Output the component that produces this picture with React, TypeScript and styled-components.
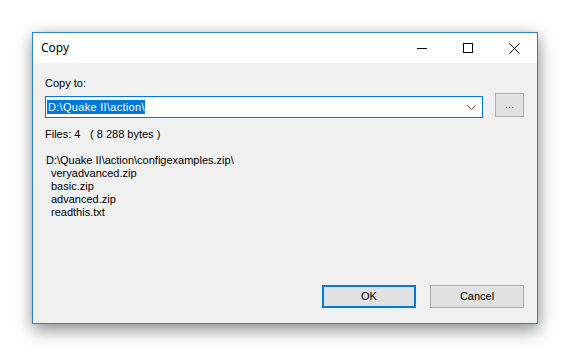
import React from "react";
import styled, { createGlobalStyle } from "styled-components";

const Global = createGlobalStyle`
  html, body { margin: 0; padding: 0; background: #ffffff; }
  body { width: 570px; height: 356px; overflow: hidden; }
`;

const Screen = styled.div`
  padding: 32px 0 0 32px;
`;

const Window = styled.div`
  box-sizing: border-box;
  width: 506px;
  height: 292px;
  border: 1px solid #2b84cf;
  display: flex;
  flex-direction: column;
  background: #f0f0f0;
  box-shadow: 1px 7px 16px rgba(0, 0, 0, 0.38), 0 0 12px rgba(0, 0, 0, 0.12);
  font-family: "Liberation Sans", Arial, sans-serif;
  font-size: 11px;
  color: #000;
`;

const TitleBar = styled.div`
  height: 30px;
  background: #ffffff;
  display: flex;
  align-items: center;
`;

const Title = styled.div`
  flex: 1;
  padding-left: 8px;
  font-family: "Noto Sans", "Open Sans", sans-serif;
  font-size: 12px;
  line-height: 16px;
  padding-bottom: 1px;
`;

const CaptionButton = styled.div`
  width: 46px;
  height: 30px;
  display: flex;
  align-items: center;
  justify-content: center;
`;

const Body = styled.div`
  flex: 1;
  display: flex;
  flex-direction: column;
  padding: 14px 13px 15px 12px;
  line-height: 13px;
`;

const Label = styled.div`
  height: 13px;
`;

const PathRow = styled.div`
  display: flex;
  align-items: flex-start;
  gap: 12px;
  margin-top: 3px;
  height: 24px;
`;

const Combo = styled.div`
  box-sizing: border-box;
  width: 438px;
  height: 22px;
  margin-top: 3px;
  border: 1px solid #0078d7;
  background: #ffffff;
  display: flex;
  align-items: center;
  padding-left: 1px;
`;

const Selected = styled.span`
  background: #0078d7;
  color: #ffffff;
  padding: 0 0 0 1px;
  line-height: 14px;
  letter-spacing: 0.3px;
`;

const ComboFill = styled.div`
  flex: 1;
`;

const ComboArrow = styled.div`
  width: 17px;
  height: 20px;
  display: flex;
  align-items: center;
  justify-content: center;
  margin-right: 2px;
`;

const BrowseButton = styled.div`
  box-sizing: border-box;
  width: 29px;
  height: 24px;
  border: 1px solid #adadad;
  background: #e1e1e1;
  color: #6d6d6d;
  display: flex;
  align-items: center;
  justify-content: center;
  padding-bottom: 2px;
`;

const InfoLine = styled.div`
  margin-top: 11px;
  display: flex;
  height: 13px;
`;

const FilesCount = styled.span`
  width: 45px;
`;

const List = styled.div`
  margin-top: 13px;
  display: flex;
  flex-direction: column;
`;

const ListItem = styled.div<{ $indent?: boolean }>`
  height: 13px;
  padding-left: ${(p) => (p.$indent ? "6px" : "1px")};
  white-space: pre;
`;

const Spacer = styled.div`
  flex: 1;
`;

const ButtonRow = styled.div`
  display: flex;
  justify-content: flex-end;
  gap: 14px;
`;

const DialogButton = styled.div<{ $default?: boolean }>`
  box-sizing: border-box;
  width: 94px;
  height: 23px;
  background: #e1e1e1;
  border: ${(p) => (p.$default ? "2px solid #0078d7" : "1px solid #adadad")};
  display: flex;
  align-items: center;
  justify-content: center;
`;

const files = ["veryadvanced.zip", "basic.zip", "advanced.zip", "readthis.txt"];

export default function App() {
  return (
    <>
      <Global />
      <Screen>
        <Window>
          <TitleBar>
            <Title>Copy</Title>
            <CaptionButton>
              <svg width="10" height="10" viewBox="0 0 10 10">
                <line x1="0" y1="5.5" x2="10" y2="5.5" stroke="#000" strokeWidth="1" />
              </svg>
            </CaptionButton>
            <CaptionButton>
              <svg width="10" height="10" viewBox="0 0 10 10">
                <rect x="0.5" y="0.5" width="9" height="9" fill="none" stroke="#000" strokeWidth="1" />
              </svg>
            </CaptionButton>
            <CaptionButton>
              <svg width="11" height="11" viewBox="0 0 11 11">
                <path d="M0.5 0.5 L10.5 10.5 M10.5 0.5 L0.5 10.5" stroke="#000" strokeWidth="1" />
              </svg>
            </CaptionButton>
          </TitleBar>
          <Body>
            <Label>Copy to:</Label>
            <PathRow>
              <Combo>
                <Selected>D:\Quake II\action\</Selected>
                <ComboFill />
                <ComboArrow>
                  <svg width="9" height="5" viewBox="0 0 9 5">
                    <path d="M0.5 0.5 L4.5 4.5 L8.5 0.5" fill="none" stroke="#505050" strokeWidth="1" />
                  </svg>
                </ComboArrow>
              </Combo>
              <BrowseButton>...</BrowseButton>
            </PathRow>
            <InfoLine>
              <FilesCount>Files: 4</FilesCount>
              <span>( 8 288 bytes )</span>
            </InfoLine>
            <List>
              <ListItem>D:\Quake II\action\configexamples.zip\</ListItem>
              {files.map((f) => (
                <ListItem key={f} $indent>
                  {f}
                </ListItem>
              ))}
            </List>
            <Spacer />
            <ButtonRow>
              <DialogButton $default>OK</DialogButton>
              <DialogButton>Cancel</DialogButton>
            </ButtonRow>
          </Body>
        </Window>
      </Screen>
    </>
  );
}
